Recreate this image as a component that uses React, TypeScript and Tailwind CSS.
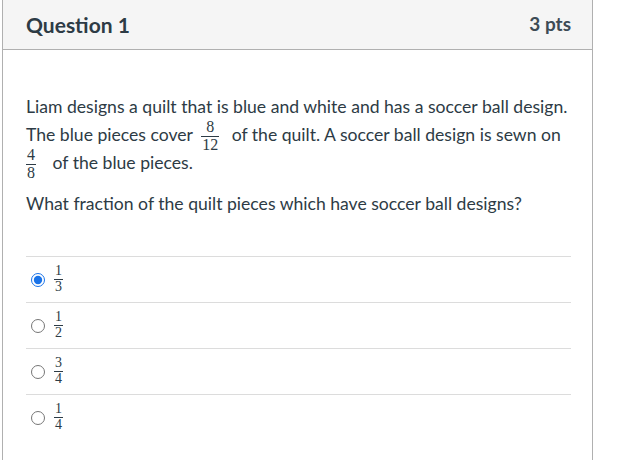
import React from "react";

function Frac({
  n,
  d,
  size = "text-[16px]",
  space = "ml-[4px] mr-[8px]",
}: {
  n: string;
  d: string;
  size?: string;
  space?: string;
}) {
  return (
    <span
      className={`-my-[6px] inline-flex flex-col items-center align-middle leading-[0.92] ${size} ${space}`}
      style={{ fontFamily: '"Liberation Serif", "DejaVu Serif", serif' }}
    >
      <span className="px-[1px] pb-[1px]">{n}</span>
      <span className="w-full border-t border-[#2d3b45] px-[1px] pt-[1px] text-center">{d}</span>
    </span>
  );
}

const answers = [
  { n: "1", d: "3", checked: true },
  { n: "1", d: "2", checked: false },
  { n: "3", d: "4", checked: false },
  { n: "1", d: "4", checked: false },
];

export default function App() {
  return (
    <div className="h-[460px] w-[622px] overflow-hidden bg-white font-['Lato','Liberation_Sans',sans-serif] text-[#2d3b45]">
      <div className="ml-[2px] h-full w-[591px] border-x border-[#b0b0b0]">
        <div className="flex h-[50px] items-center justify-between border-b border-[#b0b0b0] bg-[#f5f5f5] pl-[23px] pr-[21px]">
          <h2 className="text-[21px] font-bold">Question 1</h2>
          <span className="text-[19px] font-bold text-[#3d4b55]">3 pts</span>
        </div>
        <div className="px-[23px] pt-[43px]">
          <p className="text-[17.6px] leading-[28px]">
            Liam designs a quilt that is blue and white and has a soccer ball design. The blue pieces
            cover <Frac n="8" d="12" /> of the quilt. A soccer ball design is sewn on{" "}
            <Frac n="4" d="8" space="ml-0 mr-[12px]" /> of the blue pieces.
          </p>
          <p className="mt-[13px] text-[17.6px] leading-[28px]">
            What fraction of the quilt pieces which have soccer ball designs?
          </p>
          <div className="mt-[38px] w-[545px]">
            {answers.map((a, i) => (
              <label
                key={i}
                className="flex h-[46px] items-center border-t border-[#dcdcdc] pl-[5px]"
              >
                <input
                  type="radio"
                  name="q1"
                  defaultChecked={a.checked}
                  className="m-0 h-[14px] w-[14px] accent-[#1a73e8]"
                />
                <span className="ml-[9px] flex">
                  <Frac n={a.n} d={a.d} size="text-[14px]" space="mx-0" />
                </span>
              </label>
            ))}
          </div>
        </div>
      </div>
    </div>
  );
}
